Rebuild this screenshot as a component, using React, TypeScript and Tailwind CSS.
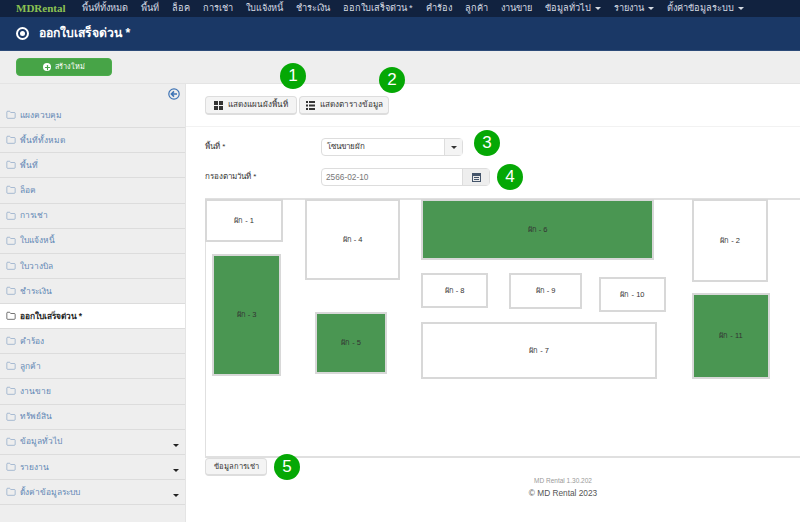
import { Folder, Plus } from "lucide-react";

const navItems = [
  { label: "พื้นที่ทั้งหมด" },
  { label: "พื้นที่" },
  { label: "ล็อค" },
  { label: "การเช่า" },
  { label: "ใบแจ้งหนี้" },
  { label: "ชำระเงิน" },
  { label: "ออกใบเสร็จด่วน *" },
  { label: "คำร้อง" },
  { label: "ลูกค้า" },
  { label: "งานขาย" },
  { label: "ข้อมูลทั่วไป", caret: true },
  { label: "รายงาน", caret: true },
  { label: "ตั้งค่าข้อมูลระบบ", caret: true },
];

const sideItems = [
  { label: "แผงควบคุม" },
  { label: "พื้นที่ทั้งหมด" },
  { label: "พื้นที่" },
  { label: "ล็อค" },
  { label: "การเช่า" },
  { label: "ใบแจ้งหนี้" },
  { label: "ใบวางบิล" },
  { label: "ชำระเงิน" },
  { label: "ออกใบเสร็จด่วน *", active: true },
  { label: "คำร้อง" },
  { label: "ลูกค้า" },
  { label: "งานขาย" },
  { label: "ทรัพย์สิน" },
  { label: "ข้อมูลทั่วไป", caret: true },
  { label: "รายงาน", caret: true },
  { label: "ตั้งค่าข้อมูลระบบ", caret: true },
];

// left, top, width, height on the plan canvas
const stalls = [
  { name: "ผัก - 1", x: -1, y: -1, w: 78, h: 43 },
  { name: "ผัก - 3", x: 6, y: 54, w: 69, h: 122, busy: true },
  { name: "ผัก - 4", x: 99, y: -1, w: 95, h: 81 },
  { name: "ผัก - 5", x: 109, y: 112, w: 72, h: 62, busy: true },
  { name: "ผัก - 6", x: 215, y: -1, w: 233, h: 61, busy: true },
  { name: "ผัก - 8", x: 215, y: 73, w: 67, h: 35 },
  { name: "ผัก - 9", x: 303, y: 73, w: 73, h: 36 },
  { name: "ผัก - 10", x: 393, y: 77, w: 67, h: 35 },
  { name: "ผัก - 7", x: 215, y: 122, w: 236, h: 57 },
  { name: "ผัก - 2", x: 486, y: -1, w: 76, h: 83 },
  { name: "ผัก - 11", x: 486, y: 93, w: 78, h: 86, busy: true },
];

function Badge({ n, className }: { n: number; className: string }) {
  return (
    <div
      className={`absolute flex h-[26px] w-[26px] items-center justify-center rounded-full bg-[#05a805] font-['Liberation_Sans',sans-serif] text-[17px] text-white ${className}`}
    >
      {n}
    </div>
  );
}

function Caret({ className }: { className?: string }) {
  return (
    <span
      className={`inline-block h-0 w-0 border-x-[3px] border-t-[3px] border-x-transparent ${className}`}
    />
  );
}

export default function App() {
  return (
    <div className="relative h-[522px] w-[800px] overflow-hidden bg-white font-['Liberation_Sans','Noto_Sans',sans-serif] text-[8px] text-[#333]">
      {/* top nav */}
      <nav className="flex h-[17px] items-center bg-[#11223f] pl-4 text-[9.2px] text-[#d6dbe3]">
        <span className="mr-[16px] font-['Liberation_Serif',serif] text-[11px] font-bold text-[#8cc152]">
          MDRental
        </span>
        <div className="flex gap-[13px]">
          {navItems.map((item) => (
            <span key={item.label} className="flex items-center gap-1 whitespace-nowrap">
              {item.label}
              {item.caret && <Caret className="border-t-[#d6dbe3]" />}
            </span>
          ))}
        </div>
      </nav>

      {/* page title */}
      <header className="flex h-[34px] items-center gap-[10px] border-b border-[#2c4a78] bg-[#1a3866] pl-4 text-white">
        <span className="flex h-[13px] w-[13px] items-center justify-center rounded-full border-2 border-white">
          <span className="h-[5px] w-[5px] rounded-full bg-white" />
        </span>
        <h1 className="text-[12.2px] font-bold">ออกใบเสร็จด่วน *</h1>
      </header>

      {/* toolbar */}
      <div className="flex h-[33px] items-center border-b border-[#e4e4e4] bg-[#eeeeee] pl-4">
        <button className="flex h-[18px] w-[96px] items-center justify-center gap-1 rounded-sm border border-[#4cae4c] bg-[#47a447] text-[7.3px] text-white">
          <span className="flex h-[8px] w-[8px] items-center justify-center rounded-full bg-white">
            <Plus size={7} strokeWidth={4} className="text-[#47a447]" />
          </span>
          สร้างใหม่
        </button>
      </div>

      <div className="flex h-[438px]">
        {/* sidebar */}
        <aside className="w-[186px] shrink-0 border-r border-[#e4e4e4] bg-[#eeeeee] text-[8.4px]">
          <div className="flex h-[19px] items-start justify-end pr-[5px] pt-[4px]">
            <svg width="12" height="12" viewBox="0 0 12 12" fill="none" stroke="#3f74b5" strokeWidth="1.2">
              <circle cx="6" cy="6" r="5.2" />
              <path d="M9 6H3.5M6 3.4 3.4 6 6 8.6" strokeWidth="1.6" />
            </svg>
          </div>
          {sideItems.map((item) => (
            <div
              key={item.label}
              className={`relative flex h-[25.125px] items-center gap-[3.5px] border-b border-[#dcdcdc] pl-[6px] ${
                item.active ? "bg-white font-bold text-[#222]" : "text-[#5f87b5]"
              }`}
            >
              <Folder size={10} strokeWidth={1.5} className={item.active ? "text-[#222]" : "text-[#7d9cc0]"} />
              <span>{item.label}</span>
              {item.caret && <Caret className="absolute bottom-[7px] right-[6px] border-t-[#222]" />}
            </div>
          ))}
        </aside>

        {/* main */}
        <main className="flex min-w-0 flex-1 flex-col">
          <div className="flex h-[43px] items-start gap-[2px] border-b border-[#f2f2f2] pl-[19px] pt-[12px] text-[8.1px]">
            <button className="flex h-[19px] w-[92px] items-center justify-center gap-[5px] rounded-sm border border-b-2 border-[#dddddd] bg-[#f4f4f4]">
              <svg width="9" height="9" viewBox="0 0 9 9" fill="#333">
                <rect width="4" height="4" />
                <rect x="5" width="4" height="4" />
                <rect y="5" width="4" height="4" />
                <rect x="5" y="5" width="4" height="4" />
              </svg>
              แสดงแผนผังพื้นที่
            </button>
            <button className="flex h-[19px] w-[90px] items-center justify-center gap-[5px] rounded-sm border border-b-2 border-[#dddddd] bg-[#f4f4f4]">
              <svg width="9" height="9" viewBox="0 0 9 9" fill="#333">
                <rect width="2" height="2" />
                <rect x="3" width="6" height="2" />
                <rect y="3.5" width="2" height="2" />
                <rect x="3" y="3.5" width="6" height="2" />
                <rect y="7" width="2" height="2" />
                <rect x="3" y="7" width="6" height="2" />
              </svg>
              แสดงตารางข้อมูล
            </button>
          </div>

          <div className="flex flex-col gap-[12px] pl-[19px] pt-[11px]">
            <div className="flex items-center">
              <label className="w-[116px]">พื้นที่ *</label>
              <div className="flex h-[18px] w-[142px] rounded-sm border border-[#dddddd]">
                <span className="flex flex-1 items-center pl-[5px]">โซนขายผัก</span>
                <span className="flex w-[18px] items-center justify-center border-l border-[#dddddd] bg-[#f4f4f4]">
                  <Caret className="border-t-[#333]" />
                </span>
              </div>
            </div>
            <div className="flex items-center">
              <label className="w-[116px]">กรองตามวันที่ *</label>
              <div className="flex h-[18px] w-[169px] rounded-sm border border-[#dddddd]">
                <span className="flex flex-1 items-center pl-[4px] text-[8.3px] text-[#777]">2566-02-10</span>
                <span className="flex w-[27px] items-center justify-center border-l border-[#dddddd] bg-[#eeeeee]">
                  <svg width="9" height="9" viewBox="0 0 9 9">
                    <rect width="9" height="9" fill="#44546a" />
                    <rect x="1" y="3" width="7" height="5" fill="#e8e8e8" />
                    <path d="M2 4.5h5M2 6.5h5" stroke="#44546a" />
                  </svg>
                </span>
              </div>
            </div>
          </div>

          {/* plan canvas */}
          <div className="relative ml-[19px] mt-[12px] h-[260px] border-y-2 border-l border-[#e0e0e0]">
            {stalls.map((s) => (
              <div
                key={s.name}
                className={`absolute flex items-center justify-center border-2 border-[#d8d8d8] text-[7.5px] ${
                  s.busy ? "bg-[#4a9652]" : "bg-white"
                }`}
                style={{ left: s.x, top: s.y, width: s.w, height: s.h }}
              >
                {s.name}
              </div>
            ))}
          </div>

          <div className="ml-[19px]">
            <button className="h-[18px] w-[62px] rounded-sm border border-b-2 border-[#dddddd] bg-[#f4f4f4] text-[7.6px]">
              ข้อมูลการเช่า
            </button>
          </div>

          <footer className="ml-[140px] text-center">
            <p className="text-[6.5px] leading-[10px] text-[#999]">MD Rental 1.30.202</p>
            <p className="mt-[1px] text-[8.3px] leading-[13px] text-[#555]">© MD Rental 2023</p>
          </footer>
        </main>
      </div>

      <Badge n={1} className="left-[280px] top-[63px]" />
      <Badge n={2} className="left-[379px] top-[67px]" />
      <Badge n={3} className="left-[474px] top-[130px]" />
      <Badge n={4} className="left-[497px] top-[164px]" />
      <Badge n={5} className="left-[274px] top-[454px]" />
    </div>
  );
}
